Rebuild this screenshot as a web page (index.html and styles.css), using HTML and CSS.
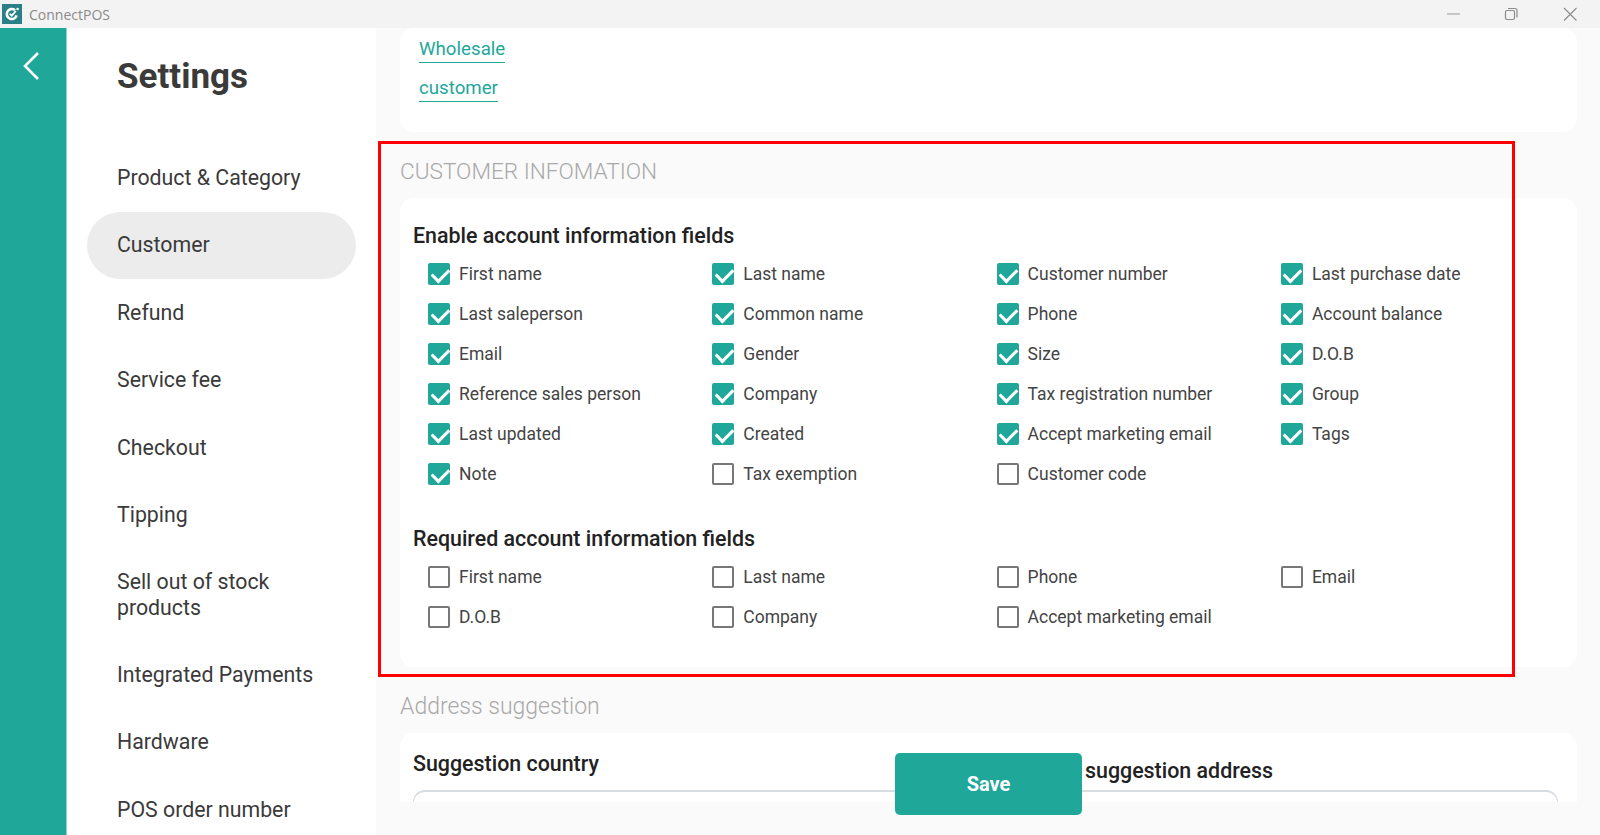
FILE: index.html
```html
<!DOCTYPE html>
<html lang="en">
<head>
  <meta charset="UTF-8" />
  <title>ConnectPOS</title>
  <link rel="stylesheet" href="styles.css">
</head>
<body>

<header class="titlebar">
  <svg class="app-logo" viewBox="0 0 20 20" width="20" height="20">
    <rect width="20" height="20" fill="#2b7f86"/>
    <path d="M13 6.2a5 5 0 1 0 1.6 5.2" fill="none" stroke="#fff" stroke-width="2.6"/>
    <path d="M7.600 9.600l2.200 2 4-4.600" fill="none" stroke="#fff" stroke-width="1.8"/>
    <circle cx="15.600" cy="5" r="1.3" fill="#fff"/>
  </svg>
  <span class="app-name">ConnectPOS</span>
  <div class="win-controls">
    <svg viewBox="0 0 16 16" width="16" height="16"><path d="M1 8h13" stroke="#a8a8a8" stroke-width="1.2"/></svg>
    <svg viewBox="0 0 16 16" width="16" height="16" fill="none" stroke="#8c8c8c" stroke-width="1.2"><rect x="2.500" y="4.500" width="9" height="9" rx="1.500"/><path d="M5 2.500h7a2 2 0 0 1 2 2v7"/></svg>
    <svg class="win-close" viewBox="0 0 16 16" width="16" height="16"><path d="M2 2l12.500 12.500M14.500 2L2 14.500" stroke="#8c8c8c" stroke-width="1.1"/></svg>
  </div>
</header>

<div class="app">
  <aside class="rail">
    <svg viewBox="0 0 20 32" width="20" height="32"><path d="M17 3L4 16l13 13" fill="none" stroke="#fff" stroke-width="2.600"/></svg>
  </aside>

  <nav class="sidebar">
    <h1>Settings</h1>
    <ul class="menu">
      <li>Product &amp; Category</li>
      <li class="active">Customer</li>
      <li>Refund</li>
      <li>Service fee</li>
      <li>Checkout</li>
      <li>Tipping</li>
      <li class="two-lines">Sell out of stock products</li>
      <li>Integrated Payments</li>
      <li>Hardware</li>
      <li>POS order number</li>
    </ul>
  </nav>

  <main class="content">
    <div class="scroll">
      <section class="card card-top">
        <a class="link">Wholesale</a>
        <a class="link">customer</a>
      </section>

      <h2 class="section-title">CUSTOMER INFOMATION</h2>
      <section class="card card-fields">
        <h3>Enable account information fields</h3>
        <div class="fields">
          <label class="field"><i class="box on"></i>First name</label>
          <label class="field"><i class="box on"></i>Last name</label>
          <label class="field"><i class="box on"></i>Customer number</label>
          <label class="field"><i class="box on"></i>Last purchase date</label>
          <label class="field"><i class="box on"></i>Last saleperson</label>
          <label class="field"><i class="box on"></i>Common name</label>
          <label class="field"><i class="box on"></i>Phone</label>
          <label class="field"><i class="box on"></i>Account balance</label>
          <label class="field"><i class="box on"></i>Email</label>
          <label class="field"><i class="box on"></i>Gender</label>
          <label class="field"><i class="box on"></i>Size</label>
          <label class="field"><i class="box on"></i>D.O.B</label>
          <label class="field"><i class="box on"></i>Reference sales person</label>
          <label class="field"><i class="box on"></i>Company</label>
          <label class="field"><i class="box on"></i>Tax registration number</label>
          <label class="field"><i class="box on"></i>Group</label>
          <label class="field"><i class="box on"></i>Last updated</label>
          <label class="field"><i class="box on"></i>Created</label>
          <label class="field"><i class="box on"></i>Accept marketing email</label>
          <label class="field"><i class="box on"></i>Tags</label>
          <label class="field"><i class="box on"></i>Note</label>
          <label class="field"><i class="box"></i>Tax exemption</label>
          <label class="field"><i class="box"></i>Customer code</label>
        </div>

        <h3 class="second">Required account information fields</h3>
        <div class="fields required">
          <label class="field"><i class="box"></i>First name</label>
          <label class="field"><i class="box"></i>Last name</label>
          <label class="field"><i class="box"></i>Phone</label>
          <label class="field"><i class="box"></i>Email</label>
          <label class="field"><i class="box"></i>D.O.B</label>
          <label class="field"><i class="box"></i>Company</label>
          <label class="field"><i class="box"></i>Accept marketing email</label>
        </div>
      </section>

      <h2 class="section-title address-title">Address suggestion</h2>
      <section class="card card-address">
        <div class="address-col">
          <h3>Suggestion country</h3>
        </div>
        <div class="address-col right">
          <h3>suggestion address</h3>
        </div>
        <div class="address-input"></div>
      </section>
    </div>

    <button class="save">Save</button>
    <div class="highlight"></div>
  </main>
</div>

</body>
</html>
```

FILE: styles.css
```css
* {
  box-sizing: border-box;
}

html, body {
  margin: 0;
  height: 100%;
  overflow: hidden;
}

body {
  font-family: Roboto, "Liberation Sans", sans-serif;
  background: #fafafa;
  color: #333;
}

.titlebar {
  height: 28px;
  background: #f3f3f3;
  display: flex;
  align-items: center;
  padding-left: 2px;
}

.app-logo {
  margin-right: 7px;
}

.app-name {
  font-family: "Open Sans", sans-serif;
  font-size: 14px;
  color: #8a8a8a;
}

.win-controls {
  margin-left: auto;
  display: flex;
  gap: 41px;
  padding-right: 22px;
}

.win-close {
  margin-left: 2px;
}

.app {
  display: flex;
  height: 807px;
}

.rail {
  width: 67px;
  flex: none;
  background: #1fa79a;
  border-right: 1px solid #8ad6cd;
  padding: 22px 0 0 21px;
}

.sidebar {
  width: 309px;
  flex: none;
  background: #fff;
  padding-top: 25px;
}

.sidebar h1 {
  margin: 0 0 43px 50px;
  font-size: 35px;
  line-height: 48px;
  font-weight: 700;
  color: #3a3a3a;
}

.menu {
  list-style: none;
  margin: 0;
  padding: 0 20px 0 20px;
}

.menu li {
  height: 67.5px;
  display: flex;
  align-items: center;
  padding-left: 30px;
  padding-right: 30px;
  font-size: 21.3px;
  line-height: 26px;
  color: #3a3a3a;
  border-radius: 34px;
}

.menu li.active {
  background: #ececec;
}

.menu li.two-lines {
  height: 92px;
}

.content {
  position: relative;
  flex: 1;
  min-width: 0;
  padding: 0 23px 0 24px;
}

.scroll {
  height: 774px;
  overflow: hidden;
}

.card {
  background: #fff;
  border-radius: 14px;
}

.card-top {
  height: 104px;
  padding: 9px 18px 0 19px;
  display: flex;
  flex-direction: column;
  align-items: flex-start;
  gap: 13px;
}

.link {
  font-size: 18.7px;
  line-height: 25px;
  color: #1fa79a;
  border-bottom: 1px solid #1fa79a;
}

.section-title {
  margin: 0;
  padding-top: 25px;
  height: 66px;
  font-size: 22.6px;
  line-height: 30px;
  font-weight: 300;
  color: #a9a9a9;
}

.card-fields {
  height: 469px;
  padding: 24px 13px 0;
}

.card h3 {
  margin: 0;
  font-size: 21.4px;
  line-height: 28px;
  font-weight: 500;
  color: #222;
}

.card h3.second {
  margin-top: 31px;
}

.fields {
  display: grid;
  grid-template-columns: repeat(4, 284.3px);
  grid-auto-rows: 40px;
  padding: 4px 0 0 15px;
}

.fields.required {
  padding-top: 4px;
}

.field {
  display: flex;
  align-items: center;
  gap: 9px;
  font-size: 17.5px;
  color: #444;
}

.box {
  position: relative;
  width: 22px;
  height: 22px;
  border: 2px solid #777;
  border-radius: 2px;
  flex: none;
}

.box.on {
  border: none;
  background: #1fa79a;
}

.box.on::after {
  content: "";
  position: absolute;
  left: 6.500px;
  top: 2px;
  width: 8px;
  height: 14px;
  border: solid #fff;
  border-width: 0 3px 3px 0;
  transform: rotate(45deg);
}

.address-title {
  font-size: 23px;
}

.card-address {
  height: 120px;
  display: flex;
  flex-wrap: wrap;
  padding: 17px 19px 0 13px;
}

.address-col {
  width: 672px;
}

.address-col.right {
  width: 470px;
  padding-top: 7px;
}

.address-input {
  width: 100%;
  height: 50px;
  margin-top: -8px;
  border: 1px solid #d8dde2;
  border-top-width: 2px;
  border-radius: 12px;
}

.save {
  position: absolute;
  left: 519px;
  top: 725px;
  width: 187px;
  height: 62px;
  background: #1fa79a;
  color: #fff;
  border: none;
  border-radius: 5px;
  font-family: Roboto, sans-serif;
  font-size: 20px;
  font-weight: 700;
}

.highlight {
  position: absolute;
  left: 2px;
  top: 113px;
  width: 1137px;
  height: 536px;
  border: 3px solid #f00;
  pointer-events: none;
}
```
